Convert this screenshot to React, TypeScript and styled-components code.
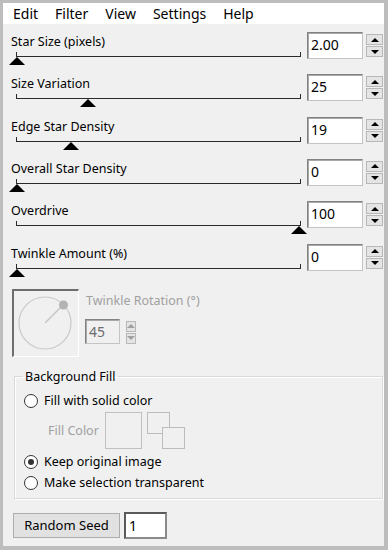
import React from 'react'
import styled, { createGlobalStyle } from 'styled-components'

const GlobalStyle = createGlobalStyle`
  html, body {
    margin: 0;
    padding: 0;
    background: #ffffff;
  }
  body {
    font-family: "Noto Sans", "Open Sans", Arial, sans-serif;
    color: #000;
  }
  * {
    box-sizing: border-box;
  }
`

interface ISlider {
    label: string
    value: string
    pos: number
}

const sliders: ISlider[] = [
    { label: 'Star Size (pixels)', value: '2.00', pos: 0 },
    { label: 'Size Variation', value: '25', pos: 25 },
    { label: 'Edge Star Density', value: '19', pos: 19 },
    { label: 'Overall Star Density', value: '0', pos: 0 },
    { label: 'Overdrive', value: '100', pos: 100 },
    { label: 'Twinkle Amount (%)', value: '0', pos: 0 },
]

const menu = ['Edit', 'Filter', 'View', 'Settings', 'Help']

const Window = styled.div`
    width: 388px;
    height: 550px;
    border-style: solid;
    border-color: #bdbdbd;
    border-width: 3px 4px 4px 3px;
    background: #f0f0f0;
    display: flex;
    flex-direction: column;
    overflow: hidden;
`

const MenuBar = styled.div`
    height: 21px;
    background: #fff;
    display: flex;
    align-items: center;
    padding-left: 1.5px;
`

const MenuItem = styled.span`
    font-size: 14px;
    line-height: 21px;
    padding: 0 8.5px;
`

const Content = styled.div`
    padding: 7px 1px 0 8px;
    font-size: 12.5px;
`

const SliderRow = styled.div`
    height: 42.33px;
    display: grid;
    grid-template-columns: 1fr 56px 17px;
    column-gap: 3px;
    align-items: start;
`

const Label = styled.div<{ $disabled?: boolean }>`
    line-height: 16px;
    margin-top: 3px;
    white-space: nowrap;
    color: ${p => (p.$disabled ? '#a0a0a0' : '#000')};
`

const Track = styled.div`
    position: relative;
    height: 5px;
    margin: 2px 3px 0 5px;
    border: 1px solid #2b2b2b;
    border-top: none;
`

const Thumb = styled.div`
    position: absolute;
    top: 5px;
    width: 0;
    height: 0;
    border-left: 8px solid transparent;
    border-right: 8px solid transparent;
    border-bottom: 8px solid #000;
`

const Field = styled.div<{ $disabled?: boolean; $w?: number; $h?: number }>`
    width: ${p => p.$w ?? 56}px;
    height: ${p => p.$h ?? 27}px;
    margin-top: 1px;
    background: ${p => (p.$disabled ? '#f0f0f0' : '#fff')};
    border: 1px solid;
    border-color: #828282 #c4c4c4 #c4c4c4 #828282;
    box-shadow: inset 1px 1px 0 #a8a8a8;
    font-size: 14px;
    line-height: 24px;
    padding-left: 3px;
    color: ${p => (p.$disabled ? '#6d6d6d' : '#000')};
`

const SpinBox = styled.div`
    display: flex;
    flex-direction: column;
    gap: 1px;
    margin-top: 3px;
`

const SpinButton = styled.div`
    height: 11px;
    background: #e4e4e4;
    border: 1px solid #b8b8b8;
    display: flex;
    align-items: center;
    justify-content: center;
`

const Arrow = styled.span<{ $down?: boolean; $disabled?: boolean }>`
    width: 0;
    height: 0;
    border-left: 4px solid transparent;
    border-right: 4px solid transparent;
    ${p => (p.$down ? 'border-top' : 'border-bottom')}: 4px solid ${p => (p.$disabled ? '#a0a0a0' : '#000')};
`

const RotationRow = styled.div`
    display: flex;
    margin-top: 4px;
    padding-left: 1px;
    gap: 7px;
`

const Dial = styled.div`
    width: 67px;
    height: 68px;
    border-style: solid;
    border-width: 2px 1px 1px 2px;
    border-color: #6e6e6e #fff #fff #6e6e6e;
`

const RotationSide = styled.div`
    display: flex;
    flex-direction: column;
`

const SmallSpinRow = styled.div`
    display: flex;
    gap: 6px;
    margin-top: 9px;
    margin-left: -1px;
`

const GroupBox = styled.fieldset`
    margin: 12px 0 0 3px;
    padding: 8px 9px 7px 9px;
    border: 1px solid #d9d9d9;
    box-shadow: inset 1px 1px 0 #fff, 1px 1px 0 #fff;
    legend {
        padding: 0 2px;
        margin-left: -1px;
        line-height: 16px;
    }
`

const RadioRow = styled.div<{ $gap?: number }>`
    display: flex;
    align-items: center;
    gap: 6px;
    height: 16px;
    margin-top: ${p => p.$gap ?? 0}px;
`

const Radio = styled.span<{ $checked?: boolean }>`
    width: 14px;
    height: 14px;
    border-radius: 50%;
    border: 1px solid #333;
    background: #fff;
    display: flex;
    align-items: center;
    justify-content: center;
    &::after {
        content: '';
        width: 6px;
        height: 6px;
        border-radius: 50%;
        background: ${p => (p.$checked ? '#333' : 'transparent')};
    }
`

const FillRow = styled.div`
    display: flex;
    align-items: center;
    margin-top: 3px;
    padding-left: 24px;
`

const FillLabel = styled.span`
    width: 57px;
    color: #a0a0a0;
`

const Swatch = styled.div`
    width: 37px;
    height: 37px;
    border: 1px solid #c0c0c0;
`

const SwapSquares = styled.div`
    position: relative;
    width: 38px;
    height: 37px;
    margin-left: 5px;
`

const Square = styled.div<{ $front?: boolean }>`
    position: absolute;
    width: 23px;
    height: 22px;
    border: 1px solid #bcbcbc;
    background: #f0f0f0;
    left: ${p => (p.$front ? 15 : 0)}px;
    top: ${p => (p.$front ? 15 : 0)}px;
`

const BottomRow = styled.div`
    display: flex;
    align-items: flex-start;
    gap: 4px;
    margin: 13px 0 0 2px;
`

const Button = styled.div`
    width: 107px;
    height: 25px;
    margin-top: 1px;
    background: #e1e1e1;
    border: 1px solid #adadad;
    font-size: 13px;
    line-height: 23px;
    text-align: center;
`

const SeedField = styled.div`
    width: 43px;
    height: 27px;
    background: #fff;
    border: 2px solid;
    border-color: #5a5a5a #8a8a8a #8a8a8a #5a5a5a;
    font-size: 14px;
    line-height: 23px;
    padding-left: 3px;
`

function Spinner({ disabled }: { disabled?: boolean }) {
    return (
        <SpinBox>
            <SpinButton><Arrow $disabled={disabled} /></SpinButton>
            <SpinButton><Arrow $down $disabled={disabled} /></SpinButton>
        </SpinBox>
    )
}

function Slider({ label, value, pos }: ISlider) {
    return (
        <SliderRow>
            <div>
                <Label>{label}</Label>
                <Track>
                    <Thumb style={{ left: `calc(${pos / 100} * (100% - 1px) - 8px)` }} />
                </Track>
            </div>
            <Field>{value}</Field>
            <Spinner />
        </SliderRow>
    )
}

export default function App() {
    return (
        <>
            <GlobalStyle />
            <Window>
                <MenuBar>
                    {menu.map(m => <MenuItem key={m}>{m}</MenuItem>)}
                </MenuBar>
                <Content>
                    {sliders.map(s => <Slider key={s.label} {...s} />)}

                    <RotationRow>
                        <Dial>
                            <svg width="64" height="65" viewBox="0 0 64 65">
                                <circle cx="31" cy="32" r="26" fill="none" stroke="#c9c9c9" strokeWidth="1.2" />
                                <line x1="31" y1="32" x2="49" y2="14" stroke="#c4c4c4" strokeWidth="1.5" />
                                <circle cx="49.5" cy="14" r="4.5" fill="#b3b3b3" />
                            </svg>
                        </Dial>
                        <RotationSide>
                            <Label $disabled style={{ marginTop: 4 }}>Twinkle Rotation (°)</Label>
                            <SmallSpinRow>
                                <Field $disabled $w={35} $h={25}>45</Field>
                                <Spinner disabled />
                            </SmallSpinRow>
                        </RotationSide>
                    </RotationRow>

                    <GroupBox>
                        <legend>Background Fill</legend>
                        <RadioRow><Radio />Fill with solid color</RadioRow>
                        <FillRow>
                            <FillLabel>Fill Color</FillLabel>
                            <Swatch />
                            <SwapSquares>
                                <Square />
                                <Square $front />
                            </SwapSquares>
                        </FillRow>
                        <RadioRow $gap={5}><Radio $checked />Keep original image</RadioRow>
                        <RadioRow $gap={5}><Radio />Make selection transparent</RadioRow>
                    </GroupBox>

                    <BottomRow>
                        <Button>Random Seed</Button>
                        <SeedField>1</SeedField>
                    </BottomRow>
                </Content>
            </Window>
        </>
    )
}
